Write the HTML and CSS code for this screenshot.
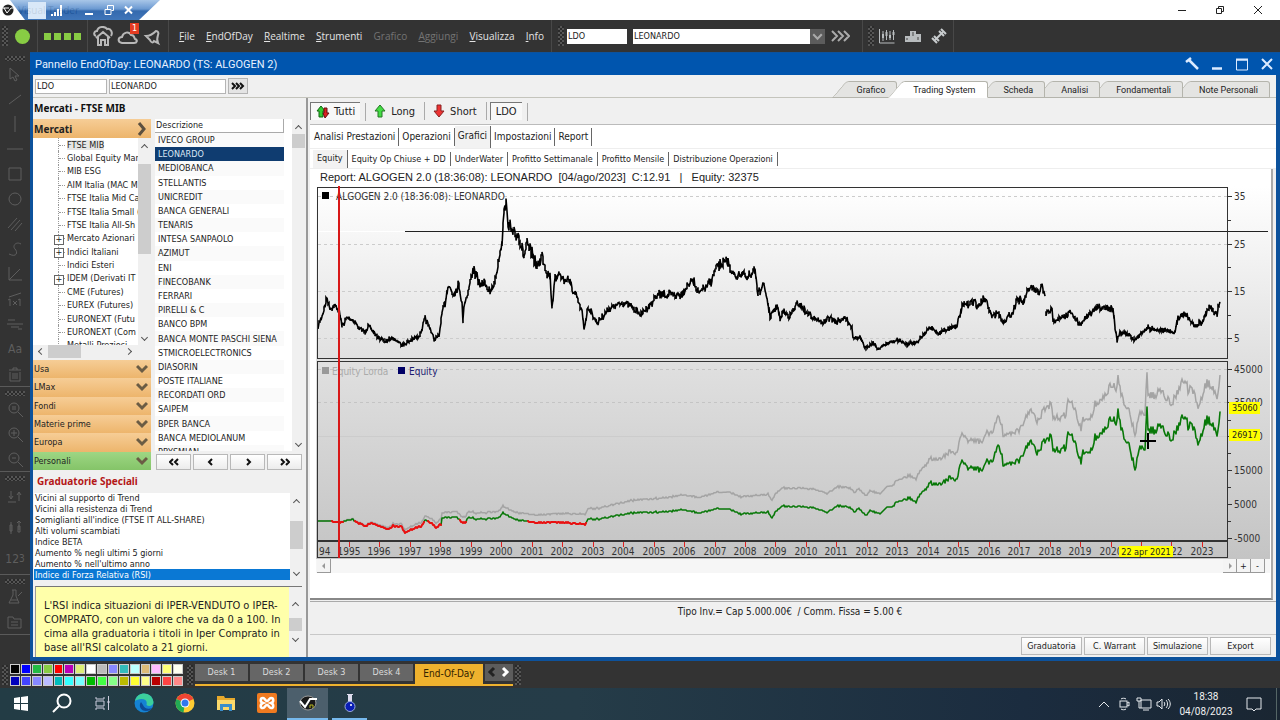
FILE: index.html
```html
<!DOCTYPE html>
<html lang="it">

<head>
    <meta charset="utf-8" />
    <title>Visual Trader</title>
    <link rel="stylesheet" href="styles.css">
</head>

<body>
    <header class="titlebar">
        <svg class="app-logo" viewBox="0 0 12 12"><circle cx="6" cy="6" r="5.500" fill="#222"/><path d="M2 4l3 5 4-5h2M1 4h6" stroke="#fff" fill="none"/></svg>
        <span class="app-name">Visual Trader</span>
        <div class="win-buttons">
            <button aria-label="Riduci"><svg viewBox="0 0 10 10"><path d="M1 5.500h8"/></svg></button>
            <button aria-label="Ripristina"><svg viewBox="0 0 10 10"><path d="M1.500 3.500h5v5h-5zM3.500 3v-1.500h5v5h-1.500"/></svg></button>
            <button aria-label="Chiudi"><svg viewBox="0 0 10 10"><path d="M1 1l8 8M9 1l-8 8"/></svg></button>
        </div>
        <!-- barra della connessione remota -->
        <div class="remote">
            <i class="remote-pin"></i>
            <svg width="18" height="13" viewBox="0 0 18 13"><path d="M6 12v-2M9 12v-4M12 12v-7M15 12v-11" stroke="#fff" stroke-width="2"/></svg>
            <svg width="10" height="12" viewBox="0 0 10 12"><path d="M1 10h8" stroke="#fff" stroke-width="2"/></svg>
            <svg width="10" height="12" viewBox="0 0 10 12"><path d="M1 5.500h6v5h-6zM3.500 5v-3.500h6v5h-2" stroke="#fff" fill="none"/></svg>
            <svg width="9" height="12" viewBox="0 0 9 12"><path d="M1 2.500l7 7M8 2.500l-7 7" stroke="#fff" stroke-width="2"/></svg>
        </div>
    </header>

    <nav class="menubar">
        <i class="grip"></i>
        <i class="led"></i>
        <div class="squares"><i></i><i></i><i></i><i></i></div>
        <div class="quick">
            <button aria-label="Home"><svg viewBox="0 0 22 20"><path d="M4 10c-3-1-2-5 1-5 1-5 8-5 10-2 4-1 6 4 4 7"/><path d="M4 12l7-6 7 6M6 11v8h3v-5h4v5h3v-8"/></svg></button>
            <button aria-label="Cloud"><svg viewBox="0 0 22 20"><path d="M5 17c-5-1-4-6 0-6 1-5 7-6 9-2 4 0 3 3 4 4 3 1 2 4-1 4z"/></svg><b>1</b></button>
            <button aria-label="Avvisi"><svg viewBox="0 0 22 20"><path d="M4 10c4 0 7-2 10-5 2 0 3 2 2 4-1 3-1 6 0 8l-4-2c-1 2-3 2-4-1z"/></svg></button>
        </div>
        <div class="menus">
            <button><u>F</u>ile</button>
            <button><u>E</u>ndOfDay</button>
            <button><u>R</u>ealtime</button>
            <button><u>S</u>trumenti</button>
            <button class="off">Grafico</button>
            <button class="off"><u>A</u>ggiungi</button>
            <button><u>V</u>isualizza</button>
            <button><u>I</u>nfo</button>
        </div>
        <i class="grip"></i>
        <input class="box ticker" aria-label="Codice" value="LDO">
        <div class="combo">
            <select class="box" aria-label="Titolo"><option>LEONARDO</option></select>
            <svg viewBox="0 0 14 14"><path d="M3 5l4 4 4-4"/></svg>
        </div>
        <button class="go" aria-label="Vai"><svg viewBox="0 0 20 12"><path d="M2 1l5 5-5 5M8 1l5 5-5 5M14 1l5 5-5 5"/></svg></button>
        <div class="extra">
            <i class="grip"></i>
            <svg viewBox="0 0 18 18"><path d="M1.500 2v14h15M5 4v10M8.500 3v10M12 4v9M15.500 3v10" stroke="#b8bcbe" fill="none"/><path d="M4 7h2v4h-2zM7.500 5h2v4h-2zM11 8h2v3h-2zM14.500 5h2v3h-2z" fill="#b8bcbe"/></svg>
            <svg viewBox="0 0 18 18"><path d="M1 9h5v-5h6v3h5v8h-16z" fill="#b8bcbe"/><path d="M9 5v4M3 11v2M14 10v3" stroke="#444"/></svg>
            <svg viewBox="0 0 18 18"><path d="M5 13l8-8" stroke="#c8ccce" stroke-width="2"/><path d="M4 9l5 5M2 11l5 5M9 4l5 5M11 2l5 5" stroke="#c8ccce" stroke-width="2"/></svg>
        </div>
    </nav>

    <main class="workspace">
        <aside class="tools">
            <div class="tool-group">
                <i class="grip-h"></i>
                <button aria-label="Seleziona"><svg viewBox="0 0 16 16"><path d="M3 2v11l3-2 2 4 2-1-2-4h4z"/></svg></button>
                <button aria-label="Linea"><svg viewBox="0 0 16 16"><path d="M2 13L14 4"/></svg></button>
                <button aria-label="Verticale"><svg viewBox="0 0 16 16"><path d="M8 0v16"/></svg></button>
                <button aria-label="Orizzontale"><svg viewBox="0 0 16 16"><path d="M0 8h16"/></svg></button>
                <button aria-label="Rettangolo"><svg viewBox="0 0 16 16"><path d="M2 2h12v12H2z"/></svg></button>
                <button aria-label="Ellisse"><svg viewBox="0 0 16 16"><circle cx="8" cy="8" r="6"/></svg></button>
                <button aria-label="Canale"><svg viewBox="0 0 16 16"><path d="M1 12L10 2M4 14L13 4M8 15l7-8"/></svg></button>
                <button aria-label="Curva"><svg viewBox="0 0 16 16"><path d="M2 13c8 4 9-2 6-5s1-8 6-5"/></svg></button>
                <button aria-label="Ventaglio"><svg viewBox="0 0 16 16"><path d="M2 1v13h13M2 14L13 3"/></svg></button>
                <button aria-label="Rapporto"><svg viewBox="0 0 16 16"><path d="M2 6l12-4M3 8v7M13 8v7M6 10l4 4M10 10l-4 4M1 9l2-1M11 9l2-1"/></svg></button>
                <button aria-label="Livelli"><svg viewBox="0 0 16 16"><path d="M1 4h7M0 8h16M4 11h8M11 13h4"/></svg></button>
                <button class="letter">Aa</button>
                <button aria-label="Cancella"><svg viewBox="0 0 16 16"><path d="M2 4h12M6 4V2h4v2M3 6v9h10V6M6 7v6M8 7v6M10 7v6"/></svg></button>
            </div>
            <div class="tool-group">
                <i class="grip-h"></i>
                <button aria-label="Zoom"><svg viewBox="0 0 16 16"><circle cx="7" cy="7" r="5"/><path d="M11 11l5 5M6 5v4M8 5v4"/></svg></button>
                <button aria-label="Ingrandisci"><svg viewBox="0 0 16 16"><circle cx="7" cy="7" r="5"/><path d="M11 11l5 5M4 7h6M7 4v6"/></svg></button>
                <button aria-label="Rimpicciolisci"><svg viewBox="0 0 16 16"><circle cx="7" cy="7" r="5"/><path d="M11 11l5 5M5 7h4"/></svg></button>
            </div>
            <div class="tool-group tall">
                <i class="grip-h"></i>
                <button aria-label="Ordini"><svg viewBox="0 0 16 16"><path d="M4 2v7M2 7l2 3 2-3M1 13h8M12 12V4M10 6l2-3 2 3"/></svg></button>
                <button aria-label="Candele"><svg viewBox="0 0 16 16"><path d="M4 2v12M3 5h2v6H3zM12 1v9M10 3l2-2 2 2M11 6h2v6h-2z"/></svg></button>
                <button class="letter" aria-label="Numeri">12<sup>3</sup></button>
            </div>
            <div class="tool-group">
                <i class="grip-h"></i>
                <button aria-label="Laboratorio"><svg viewBox="0 0 16 16"><path d="M5 1h4M6 1v5l-4 8h10l-3-7V1M4 11h7M11 7l4-4"/></svg></button>
                <button aria-label="Note"><svg viewBox="0 0 16 16"><path d="M1 3h5l1 2h7v9H1zM4 8h7M4 11h7"/></svg></button>
            </div>
        </aside>

        <section class="window">
            <div class="window-title">
                <h1>Pannello EndOfDay: LEONARDO (TS: ALGOGEN 2)</h1>
                <div class="window-buttons">
                    <button aria-label="Opzioni"><svg viewBox="0 0 14 14"><path d="M1 5l5-4M4 3l9 9" stroke-width="2.500"/></svg></button>
                    <button aria-label="Riduci"><svg viewBox="0 0 14 14"><path d="M2 11.500h10" stroke-width="2.500"/></svg></button>
                    <button aria-label="Ingrandisci"><svg viewBox="0 0 14 14"><path d="M1.500 3h11v10h-11z"/><path d="M1 2.500h12" stroke-width="2"/></svg></button>
                    <button aria-label="Chiudi"><svg viewBox="0 0 14 14"><path d="M2 2l10 10M12 2L2 12" stroke-width="2"/></svg></button>
                </div>
            </div>

            <div class="searchbar">
                <input class="field short" aria-label="Codice titolo" value="LDO">
                <input class="field" aria-label="Nome titolo" value="LEONARDO">
                <button class="more" aria-label="Cerca"><svg viewBox="0 0 14 8"><path d="M1 1l3 3-3 3M5 1l3 3-3 3M9 1l3 3-3 3"/></svg></button>
                <div class="pages">
                    <button>Grafico</button>
                    <button class="current">Trading System</button>
                    <button>Scheda</button>
                    <button>Analisi</button>
                    <button>Fondamentali</button>
                    <button>Note Personali</button>
                </div>
            </div>

            <div class="panes">
                <aside class="side">
                    <h2>Mercati - FTSE MIB</h2>
                    <div class="lists">
                        <div class="markets">
                            <button class="market-head">Mercati <svg viewBox="0 0 12 14"><path d="M3 1l5 6-5 6"/></svg></button>
                            <div class="tree-wrap">
                                <ul class="tree">
                                    <li><span class="sel">FTSE MIB</span></li>
                                    <li>Global Equity Mar</li>
                                    <li>MIB ESG</li>
                                    <li>AIM Italia (MAC M</li>
                                    <li>FTSE Italia Mid Ca</li>
                                    <li>FTSE Italia Small (</li>
                                    <li>FTSE Italia All-Sh</li>
                                    <li class="plus">Mercato Azionari</li>
                                    <li class="plus">Indici Italiani</li>
                                    <li>Indici Esteri</li>
                                    <li class="plus">IDEM (Derivati IT</li>
                                    <li>CME (Futures)</li>
                                    <li>EUREX (Futures)</li>
                                    <li>EURONEXT (Futu</li>
                                    <li>EURONEXT (Com</li>
                                    <li>Metalli Preziosi</li>
                                </ul>
                                <div class="scroll tree-scroll"><i class="up"></i><b></b><i class="down"></i></div>
                            </div>
                            <div class="hscroll"><i class="left"></i><b></b><i class="right"></i></div>
                            <div class="groups">
                                <button>Usa <svg viewBox="0 0 12 10"><path d="M1 2l5 5 5-5"/></svg></button>
                                <button>LMax <svg viewBox="0 0 12 10"><path d="M1 2l5 5 5-5"/></svg></button>
                                <button>Fondi <svg viewBox="0 0 12 10"><path d="M1 2l5 5 5-5"/></svg></button>
                                <button>Materie prime <svg viewBox="0 0 12 10"><path d="M1 2l5 5 5-5"/></svg></button>
                                <button>Europa <svg viewBox="0 0 12 10"><path d="M1 2l5 5 5-5"/></svg></button>
                                <button class="green">Personali <svg viewBox="0 0 12 10"><path d="M1 2l5 5 5-5"/></svg></button>
                            </div>
                        </div>
                        <div class="stocks">
                            <div class="stocks-body">
                                <div class="stocks-col">
                                    <div class="stocks-head">Descrizione</div>
                                    <div class="stocks-view">
                                        <ul class="stock-list">
                                            <li>IVECO GROUP</li>
                                            <li class="sel">LEONARDO</li>
                                            <li>MEDIOBANCA</li>
                                            <li>STELLANTIS</li>
                                            <li>UNICREDIT</li>
                                            <li>BANCA GENERALI</li>
                                            <li>TENARIS</li>
                                            <li>INTESA SANPAOLO</li>
                                            <li>AZIMUT</li>
                                            <li>ENI</li>
                                            <li>FINECOBANK</li>
                                            <li>FERRARI</li>
                                            <li>PIRELLI &amp; C</li>
                                            <li>BANCO BPM</li>
                                            <li>BANCA MONTE PASCHI SIENA</li>
                                            <li>STMICROELECTRONICS</li>
                                            <li>DIASORIN</li>
                                            <li>POSTE ITALIANE</li>
                                            <li>RECORDATI ORD</li>
                                            <li>SAIPEM</li>
                                            <li>BPER BANCA</li>
                                            <li>BANCA MEDIOLANUM</li>
                                            <li>PRYSMIAN</li>
                                        </ul>
                                    </div>
                                </div>
                                <div class="scroll stock-scroll"><i class="up"></i><b></b><i class="down"></i></div>
                            </div>
                            <div class="pager">
                                <button aria-label="Primo"><svg viewBox="0 0 10 8"><path d="M4 1L1 4l3 3M9 1L6 4l3 3"/></svg></button>
                                <button aria-label="Precedente"><svg viewBox="0 0 10 8"><path d="M6 1L3 4l3 3"/></svg></button>
                                <button aria-label="Successivo"><svg viewBox="0 0 10 8"><path d="M4 1l3 3-3 3"/></svg></button>
                                <button aria-label="Ultimo"><svg viewBox="0 0 10 8"><path d="M1 1l3 3-3 3M6 1l3 3-3 3"/></svg></button>
                            </div>
                        </div>
                    </div>
                    <h3>Graduatorie Speciali</h3>
                    <div class="ranks">
                        <ul class="rank-list">
                            <li>Vicini al supporto di Trend</li>
                            <li>Vicini alla resistenza di Trend</li>
                            <li>Somiglianti all'indice (FTSE IT ALL-SHARE)</li>
                            <li>Alti volumi scambiati</li>
                            <li>Indice BETA</li>
                            <li>Aumento % negli ultimi 5 giorni</li>
                            <li>Aumento % nell'ultimo anno</li>
                            <li class="sel">Indice di Forza Relativa (RSI)</li>
                        </ul>
                        <div class="scroll rank-scroll"><i class="up"></i><b></b><i class="down"></i></div>
                    </div>
                    <div class="hint">
                        <p>L'RSI indica situazioni di IPER-VENDUTO o IPER-COMPRATO, con un valore che va da 0 a 100. In cima alla graduatoria i titoli in Iper Comprato in base all'RSI calcolato a 21 giorni.</p>
                        <div class="scroll hint-scroll"><i class="up"></i><b></b><i class="down"></i></div>
                    </div>
                </aside>

                <div class="content">
                    <div class="filters">
                        <button class="pressed"><svg viewBox="0 0 14 14"><path d="M5 1l4 5h-2v6h-4v-6h-2z" fill="#3c3" stroke="#161"/><path d="M9 13l4-5h-2v-5h-3v5h-1z" fill="#d22" stroke="#611"/></svg>Tutti</button>
                        <button><svg viewBox="0 0 14 14"><path d="M7 1l5 6h-3v6h-4v-6h-3z" fill="#4d4" stroke="#272"/></svg>Long</button>
                        <button><svg viewBox="0 0 14 14"><path d="M7 13l5-6h-3v-6h-4v6h-3z" fill="#e33" stroke="#822"/></svg>Short</button>
                        <button class="pressed">LDO</button>
                    </div>
                    <div class="tabs">
                        <button>Analisi Prestazioni</button>
                        <button>Operazioni</button>
                        <button class="current">Grafici</button>
                        <button>Impostazioni</button>
                        <button>Report</button>
                    </div>
                    <div class="tabs small">
                        <button class="current">Equity</button>
                        <button>Equity Op Chiuse + DD</button>
                        <button>UnderWater</button>
                        <button>Profitto Settimanale</button>
                        <button>Profitto Mensile</button>
                        <button>Distribuzione Operazioni</button>
                    </div>
                    <div class="report">
                        <p class="report-title">Report: ALGOGEN 2.0 (18:36:08): LEONARDO  [04/ago/2023]  C:12.91   |   Equity: 32375</p>
                        <svg id="chart" viewBox="0 0 954 373"></svg>
                        <div class="chart-scroll">
                            <button aria-label="Indietro"><svg viewBox="0 0 8 8"><path d="M5 1L2 4l3 3z"/></svg></button>
                            <span></span>
                            <button aria-label="Avanti"><svg viewBox="0 0 8 8"><path d="M3 1l3 3-3 3z"/></svg></button>
                            <button>+</button>
                            <button>-</button>
                        </div>
                    </div>
                    <p class="info">Tipo Inv.= Cap 5.000.00€  / Comm. Fissa = 5.00 €</p>
                    <div class="actions">
                        <button>Graduatoria</button>
                        <button>C. Warrant</button>
                        <button>Simulazione</button>
                        <button>Export</button>
                    </div>
                </div>
            </div>
        </section>
    </main>

    <div class="deskbar">
        <i class="grip"></i>
        <div id="palette" class="palette"></div>
        <i class="grip"></i>
        <div class="desks">
            <button>Desk 1</button>
            <button>Desk 2</button>
            <button>Desk 3</button>
            <button>Desk 4</button>
            <button class="current">End-Of-Day</button>
            <span class="desk-arrows"><svg viewBox="0 0 28 14"><path d="M9 3L5 7l4 4" stroke="#222"/><path d="M18 3l4 4-4 4" stroke="#fff"/></svg></span>
        </div>
        <i class="grip"></i>
    </div>

    <footer class="taskbar">
        <div class="apps">
            <button aria-label="Start"><svg viewBox="0 0 20 20"><path d="M3 5l6-1v6H3zM10 4l7-1v7h-7zM3 11h6v6l-6-1zM10 11h7v7l-7-1z" fill="#fff"/></svg></button>
            <button aria-label="Cerca"><svg viewBox="0 0 20 20"><circle cx="12" cy="8" r="6.500" fill="none" stroke="#fff" stroke-width="2"/><path d="M7 13l-6 6" stroke="#fff" stroke-width="2"/></svg></button>
            <button aria-label="Attività"><svg viewBox="0 0 20 20"><path d="M3 4v2h8V4M3 8h8v5H3zM3 17v-2h8v2M15.500 3v14M14 9h3" fill="none" stroke="#ccd"/></svg></button>
            <button aria-label="Edge"><svg viewBox="0 0 20 20"><circle cx="10" cy="10" r="9.500" fill="#1583d3"/><path d="M1 8C3-2 18-2 19.500 9c0 4-5 5-7 3 1-4-1-6-5-6-3 0-5 1-6.500 2z" fill="#3ccf9c"/><path d="M7 9c-3 4 0 9 5 9 3 0 5-1 6-3-4 2-8 0-9-3z" fill="#0d4a96"/></svg></button>
            <button aria-label="Chrome"><svg viewBox="0 0 20 20"><circle cx="10" cy="10" r="9.500" fill="#fc3"/><path d="M10 10L1.500 6A9.500 9.500 0 0 1 18.500 6z" fill="#e43"/><path d="M10 10L1.500 6a9.500 9.500 0 0 0 7 13.500z" fill="#2a5"/><circle cx="10" cy="10" r="4.500" fill="#fff"/><circle cx="10" cy="10" r="3.500" fill="#37e"/></svg></button>
            <button aria-label="File"><svg viewBox="0 0 20 20"><path d="M1 3h7l1 2h10v12H1z" fill="#e8a92c"/><path d="M1 7h18v10H1z" fill="#fbd96b"/><path d="M4 18v-7h12v7h-3v-4H7v4z" fill="#3a8ecb"/></svg></button>
            <button aria-label="XAMPP"><svg viewBox="0 0 20 20"><rect width="20" height="20" rx="2" fill="#f07a20"/><path d="M6 5c-3 0-3 4 0 5-3 1-3 5 0 5 2 0 2-3 4-3s2 3 4 3c3 0 3-4 0-5 3-1 3-5 0-5-2 0-2 3-4 3s-2-3-4-3z" fill="none" stroke="#fff" stroke-width="2.500"/></svg></button>
            <button class="active" aria-label="Visual Trader"><svg viewBox="0 0 20 20"><ellipse cx="10" cy="10" rx="8" ry="7" fill="#191919" stroke="#999"/><path d="M2 8l5 6 5-8h7" fill="none" stroke="#fff" stroke-width="2"/><path d="M12 15v-3h3v3" fill="none" stroke="#bb2"/></svg></button>
            <button class="open" aria-label="Laboratorio"><svg viewBox="0 0 20 20"><path d="M7 1h6v1h-1v7h-4v-7h-1z" fill="#dde"/><circle cx="10" cy="13.500" r="5" fill="#0a1eb4" stroke="#9ad"/><circle cx="11" cy="12" r="1" fill="#fff"/></svg></button>
        </div>
        <div class="tray">
            <svg viewBox="0 0 16 16"><path d="M3 11l5-5 5 5"/></svg>
            <svg viewBox="0 0 16 16"><rect x="4" y="5" width="7" height="6"/><path d="M11 7l2-1v4l-2-1M5 3c1-1 4-1 5 0M5 13c1 1 4 1 5 0"/></svg>
            <svg viewBox="0 0 16 16"><path d="M5 4h10v8H5zM7 14h6M1 2h4v3H1zM3 5v7h2"/></svg>
            <svg viewBox="0 0 16 16"><path d="M1 6h2l3-3v10l-3-3H1zM8 6c1 1 1 3 0 4M10 4c2 2 2 6 0 8M12 3c3 3 3 7 0 10"/></svg>
            <div class="clock">18:38<br>04/08/2023</div>
            <svg viewBox="0 0 16 16"><path d="M1 2h14v11h-5l-2 2-2-2H1z"/></svg>
            <i class="peek"></i>
        </div>
    </footer>
    <script src="chart.js"></script>
</body>

</html>
```
FILE: styles.css
```css
* {
    margin: 0;
    padding: 0;
    box-sizing: border-box;
}

body {
    display: flex;
    flex-direction: column;
    min-height: 100vh;
    overflow-x: hidden;
    font-family: "DejaVu Sans Condensed", "DejaVu Sans", sans-serif;
    font-size: 9px;
    color: #222;
    background: #333;
}

ul {
    list-style: none;
}

button,
input,
select {
    font: inherit;
    color: inherit;
    border: none;
    background: none;
    border-radius: 0;
}

svg {
    display: block;
    flex: none;
}

/* barra del titolo */
.titlebar {
    position: relative;
    display: flex;
    align-items: center;
    height: 20px;
    padding: 0 17px 0 2px;
    background: #fff;
}

.app-logo {
    width: 12px;
    height: 12px;
}

.app-name {
    margin-left: 4px;
    font-family: "Open Sans", sans-serif;
    font-size: 10px;
}

.win-buttons {
    display: flex;
    gap: 28px;
    margin-left: auto;
}

.win-buttons svg {
    width: 10px;
    height: 10px;
    fill: none;
    stroke: #222;
}

.remote {
    position: absolute;
    left: 10px;
    top: 0;
    display: flex;
    align-items: center;
    gap: 10px;
    width: 150px;
    height: 20px;
    padding-left: 18px;
    background: linear-gradient(#9fc0e6, #5c8fcd 45%, #1f5aa6 55%, #2b67b2);
    clip-path: polygon(0 0, 100% 0, 86% 100%, 10% 100%);
    opacity: 0.9;
}

.remote svg:nth-of-type(1) {
    margin-right: 10px;
}

.remote-pin {
    width: 18px;
    height: 17px;
    margin-right: -10px;
    background: #d5e6f8;
}

/* menu principale */
.menubar {
    display: flex;
    align-items: center;
    height: 32px;
    padding-left: 2px;
    background: #333;
    color: #e4e4e4;
}

.grip {
    width: 6px;
    height: 20px;
    background: repeating-conic-gradient(#555 0 25%, #2a2a2a 0 50%) 0 0 / 4px 4px;
}

.led {
    width: 15px;
    height: 15px;
    margin: 0 7px;
    border-radius: 50%;
    background: #8c4;
}

.squares {
    display: flex;
    align-items: center;
    gap: 3px;
    height: 100%;
    padding: 0 6px;
    border-left: 1px solid #484848;
    border-right: 1px solid #484848;
}

.squares i {
    width: 7px;
    height: 7px;
    background: #8c4;
}

.quick {
    display: flex;
    align-items: center;
    gap: 3px;
    height: 100%;
    padding: 0 4px;
    border-right: 1px solid #484848;
}

.quick button {
    position: relative;
}

.quick svg {
    width: 22px;
    height: 20px;
    fill: none;
    stroke: #b8b8b8;
    stroke-width: 2;
}

.quick b {
    position: absolute;
    right: 0;
    top: -3px;
    width: 9px;
    font-weight: normal;
    line-height: 11px;
    color: #fff;
    background: #e43c22;
}

.menus {
    display: flex;
    align-items: center;
    justify-content: space-between;
    width: 383px;
    height: 100%;
    padding: 0 7px 0 10px;
    border-right: 1px solid #484848;
    margin-right: 6px;
    font-family: "Open Sans", sans-serif;
    font-size: 10px;
}

.menus .off {
    color: #747474;
}

.box {
    height: 15px;
    padding: 0 1px;
    color: #222;
    background: #fff;
    appearance: none;
}

.ticker {
    width: 60px;
    margin: 0 6px 0 3px;
}

.combo {
    display: flex;
    width: 192px;
}

.combo .box {
    flex: 1;
}

.combo svg {
    width: 15px;
    height: 15px;
    fill: none;
    stroke: #aaa;
    stroke-width: 2;
    background: #5c5c5c;
}

.go {
    margin: 0 12px 0 5px;
}

.go svg {
    width: 20px;
    height: 12px;
    fill: none;
    stroke: #aaa;
    stroke-width: 2;
}

.extra {
    display: flex;
    align-items: center;
    gap: 8px;
    height: 100%;
    padding: 0 5px;
    border-left: 1px solid #484848;
    border-right: 1px solid #484848;
}

.extra svg {
    width: 18px;
    height: 18px;
}

.extra .grip {
    margin-right: -4px;
}

/* area di lavoro */
.workspace {
    flex: 1;
    display: flex;
}

.tools {
    width: 30px;
    background: #333;
}

.tool-group {
    display: flex;
    flex-direction: column;
    align-items: center;
    padding-top: 4px;
    border-bottom: 1px solid #5a5a5a;
}

.tool-group button {
    display: flex;
    align-items: center;
    justify-content: center;
    width: 28px;
    height: 25px;
}

.tool-group.tall button {
    height: 31px;
}

.tool-group svg {
    width: 16px;
    height: 16px;
    fill: none;
    stroke: #5e5e5e;
}

.tool-group .letter {
    font-size: 12px;
    color: #5e5e5e;
}

.tool-group sup {
    font-size: 10px;
}

.grip-h {
    width: 20px;
    height: 5px;
    background: repeating-conic-gradient(#555 0 25%, #2a2a2a 0 50%) 0 0 / 4px 4px;
}

.window {
    flex: 1;
    display: flex;
    flex-direction: column;
    min-width: 0;
    border: solid #0d529c;
    border-width: 1px 4px 4px 3px;
    background: #f0f0f0;
}

.window-title {
    display: flex;
    align-items: center;
    justify-content: space-between;
    height: 22px;
    margin-right: -4px;
    margin-left: -3px;
    padding: 0 6px 0 5px;
    background: #0055ae;
    color: #e8f2ff;
}

.window-title h1 {
    font-size: 11px;
    font-weight: normal;
    font-family: "Roboto", sans-serif;
}

.window-buttons {
    display: flex;
    gap: 11px;
}

.window-buttons svg {
    width: 14px;
    height: 14px;
    fill: none;
    stroke: #dcebff;
}

.searchbar {
    display: flex;
    align-items: center;
    gap: 2px;
    height: 23px;
    padding-left: 2px;
    border-bottom: 1px solid #c4c4bc;
}

.field {
    width: 117px;
    height: 15px;
    padding: 0 1px;
    border: 1px solid #b4b4b4;
    background: #fff;
}

.field.short {
    width: 72px;
}

.more {
    display: flex;
    align-items: center;
    justify-content: center;
    width: 20px;
    height: 16px;
    border: 1px solid #b4b4b4;
    background: #e4e4e4;
}

.more svg {
    width: 14px;
    height: 8px;
    fill: none;
    stroke: #111;
    stroke-width: 2;
}

.pages {
    align-self: flex-end;
    display: flex;
    margin-left: auto;
    margin-right: 6px;
    margin-bottom: -1px;
    font-family: "Roboto", sans-serif;
}

.pages button {
    position: relative;
    height: 17px;
    margin-left: -9px;
    padding: 0 12px 0 25px;
    isolation: isolate;
}

.pages button::before,
.pages button::after {
    content: "";
    position: absolute;
    top: 0;
    bottom: 0;
    z-index: -1;
    border-top: 1px solid #b4b4ac;
    border-bottom: 1px solid #b4b4ac;
    background: #e4e4e2;
}

.pages button::before {
    left: 0;
    width: 20px;
    border-left: 1px solid #b4b4ac;
    transform: skewX(-40deg);
    transform-origin: bottom;
    border-top-left-radius: 3px;
}

.pages button::after {
    left: 18px;
    right: 0;
    border-right: 1px solid #b4b4ac;
    border-top-right-radius: 3px;
}

.pages button:nth-child(3) { z-index: 4; }
.pages button:nth-child(4) { z-index: 3; }
.pages button:nth-child(5) { z-index: 2; }
.pages button:nth-child(6) { z-index: 1; }

.pages .current {
    z-index: 5;
}

.pages .current::before,
.pages .current::after {
    background: #fff;
    border-bottom-color: #fff;
}

.panes {
    flex: 1;
    display: flex;
}

/* colonna sinistra */
.side {
    width: 275px;
    border-right: 2px solid #999;
}

.side h2,
.side h3,
.market-head {
    font-family: "Noto Sans", sans-serif;
    font-size: 10px;
    font-weight: bold;
}

.side h2 {
    padding-left: 1px;
    line-height: 21px;
    color: #111;
}

.lists {
    display: flex;
    gap: 4px;
    height: 351px;
}

.markets {
    display: flex;
    flex-direction: column;
    width: 118px;
}

.market-head,
.groups button {
    display: flex;
    align-items: center;
    justify-content: space-between;
    width: 100%;
    padding: 0 3px 0 1px;
    background: linear-gradient(#f6cd96, #edb56c);
}

.market-head {
    height: 19px;
}

.market-head svg {
    width: 12px;
    height: 14px;
    fill: none;
    stroke: #5c5040;
    stroke-width: 3;
}

.tree-wrap {
    display: flex;
    height: 207px;
    overflow: hidden;
    background: #fff;
}

.tree {
    position: relative;
    flex: 1;
    display: grid;
    grid-auto-rows: 1fr;
    height: 214px;
    padding-left: 25px;
    overflow: hidden;
}

.tree li {
    position: relative;
    display: flex;
    align-items: center;
    padding-left: 8px;
    white-space: nowrap;
    border-left: 1px dotted #999;
}

.tree li::before {
    content: "";
    position: absolute;
    left: 0;
    top: 50%;
    width: 6px;
    border-top: 1px dotted #999;
}

.tree .plus::after {
    content: "+";
    position: absolute;
    left: -5px;
    top: 3px;
    width: 8px;
    height: 8px;
    line-height: 6px;
    text-align: center;
    border: 1px solid #666;
    background: #fff;
}

.tree .sel {
    background: #e6e6e6;
}

.scroll {
    display: flex;
    flex-direction: column;
    align-items: center;
    width: 13px;
    background: #f0f0f0;
}

.scroll i,
.hscroll i {
    flex: none;
    width: 5px;
    height: 5px;
    border: solid #555;
    border-width: 1px 0 0 1px;
}

.scroll b,
.hscroll b {
    background: #cdcdcd;
}

.scroll b {
    width: 100%;
}

.scroll .up {
    transform: rotate(45deg);
    margin: 7px 0 6px;
}

.scroll .down {
    transform: rotate(225deg);
    margin: auto 0 5px;
}

.tree-scroll b {
    height: 90px;
    margin-top: 8px;
}

.hscroll {
    display: flex;
    align-items: center;
    height: 13px;
    margin-bottom: 2px;
    padding: 0 20px 0 6px;
    background: #f0f0f0;
}

.hscroll b {
    width: 33px;
    height: 13px;
    margin-left: 4px;
}

.hscroll .left {
    transform: rotate(-45deg);
}

.hscroll .right {
    margin-left: auto;
    transform: rotate(135deg);
}

.groups {
    flex: 1;
    display: grid;
    grid-auto-rows: 1fr;
}

.groups svg {
    width: 12px;
    height: 10px;
    fill: none;
    stroke: #6b5c44;
    stroke-width: 3;
}

.groups .green {
    background: linear-gradient(#9ed684, #84c468);
}

.stocks {
    flex: 1;
    display: flex;
    flex-direction: column;
}

.stocks-body {
    display: flex;
    height: 332px;
    margin-right: 1px;
    background: #fff;
}

.stocks-col {
    flex: 1;
}

.stocks-head {
    width: 129px;
    height: 14px;
    padding-left: 1px;
    line-height: 13px;
    border-right: 1px solid #aaa;
    border-bottom: 1px solid #aaa;
}

.stocks-view {
    height: 318px;
    overflow: hidden;
}

.stock-list {
    display: grid;
    grid-auto-rows: 1fr;
    width: 129px;
    height: 326px;
}

.stock-list li {
    display: flex;
    align-items: center;
    padding-left: 3px;
    white-space: nowrap;
}

.stock-list li:nth-child(odd) {
    background: #fafafa;
}

.stock-list .sel {
    color: #dbe7f5;
    background: #0f3c70;
}

.stock-scroll b {
    height: 14px;
    margin-top: -3px;
}

.pager {
    display: grid;
    grid-template-columns: repeat(4, 1fr);
    gap: 2px;
    margin-top: auto;
    padding: 0 4px 0 1px;
}

.pager button,
.actions button {
    display: flex;
    align-items: center;
    justify-content: center;
    height: 16px;
    border: 1px solid #b8b8b8;
    background: linear-gradient(#fff, #ececec);
}

.pager svg {
    width: 10px;
    height: 8px;
    fill: none;
    stroke: #111;
    stroke-width: 2;
}

.side h3 {
    padding-left: 4px;
    line-height: 23px;
    color: #b41818;
}

.ranks {
    display: flex;
    height: 87px;
    padding: 0 3px 0 1px;
}

.rank-list {
    flex: 1;
    display: grid;
    grid-auto-rows: 1fr;
    background: #fff;
}

.rank-list li {
    display: flex;
    align-items: center;
    padding-left: 1px;
}

.rank-list .sel {
    color: #fff;
    background: #0a78d4;
}

.rank-scroll b {
    height: 28px;
    margin-top: 10px;
}

.hint {
    display: flex;
    height: 71px;
    margin: 6px 4px 0 2px;
    border-top: 1px solid #777;
    border-left: 1px solid #999;
    background: #ffa;
}

.hint p {
    flex: 1;
    padding: 12px 0 0 8px;
    font-size: 11px;
    line-height: 14px;
}

.hint-scroll b {
    height: 13px;
    margin-top: 10px;
}

.hint-scroll .up {
    margin-top: 16px;
    margin-bottom: 0;
}

.hint-scroll .down {
    margin-bottom: 16px;
}

/* contenuto */
.content {
    flex: 1;
    display: flex;
    flex-direction: column;
    min-width: 0;
    padding-left: 2px;
}

.filters {
    display: flex;
    align-items: center;
    gap: 4px;
    height: 27px;
    border-bottom: 1px solid #bbb;
    font-size: 11px;
}

.filters button {
    display: flex;
    align-items: center;
    gap: 4px;
    height: 18px;
    margin-right: 5px;
    padding: 0 4px;
    position: relative;
}

.filters button::after {
    content: "";
    position: absolute;
    right: -6px;
    top: 0;
    height: 18px;
    border-right: 1px solid #aaa;
}

.filters .pressed {
    padding: 0 5px;
    border-top: 1px solid #777;
    border-left: 1px solid #777;
    background: #f8f8f8;
}

.filters svg {
    width: 14px;
    height: 14px;
}

.tabs {
    display: flex;
    align-items: center;
    height: 24px;
    padding-left: 1px;
    font-size: 10px;
    background: #fff;
    border-bottom: 1px solid #eee;
}

.tabs button {
    height: 18px;
    padding: 0 3px;
    border-right: 1px solid #666;
}

.tabs .current {
    align-self: flex-end;
    height: 22px;
    padding-bottom: 4px;
    background: #f2f2f2;
}

.tabs.small {
    height: 20px;
    padding-left: 3px;
    font-size: 9px;
}

.tabs.small button {
    height: 14px;
    padding: 0 4px;
}

.tabs.small .current {
    height: 18px;
    padding-bottom: 2px;
}

.report {
    flex: 1;
    margin-right: 3px;
    padding: 0 1px 0 6px;
    background: #fff;
    border-right: 2px solid #aaa;
    border-bottom: 2px solid #888;
}

.report-title {
    padding-left: 4px;
    font-family: "Liberation Sans", sans-serif;
    font-size: 11px;
    line-height: 17px;
    white-space: pre;
}

#chart {
    width: 100%;
    height: auto;
}

#chart text {
    font-size: 10px;
    fill: #333;
}

#chart .tag {
    font-size: 9px;
    fill: #222;
}

#chart .gross {
    fill: #aaa;
}

#chart .net {
    fill: #1a1a70;
}

.chart-scroll {
    display: flex;
    height: 14px;
    padding: 0 5px 0 1px;
    background: #f6f6f6;
}

.chart-scroll span {
    flex: 1;
}

.chart-scroll button {
    display: flex;
    align-items: center;
    justify-content: center;
    width: 14px;
    border: solid #999;
    border-width: 0 1px 1px 0;
    background: #f4f4f4;
}

.chart-scroll svg {
    width: 8px;
    height: 8px;
    fill: #999;
}

.info {
    height: 34px;
    margin-top: 1px;
    padding-right: 6px;
    font-size: 10px;
    line-height: 20px;
    text-align: center;
    white-space: pre;
    border-top: 1px solid #aaa;
    border-bottom: 1px solid #c8c8c8;
}

.actions {
    display: flex;
    justify-content: flex-end;
    align-items: center;
    gap: 2px;
    height: 22px;
    padding-right: 5px;
}

.actions button {
    width: 61px;
    height: 18px;
}

/* barra dei desk */
.deskbar {
    display: flex;
    align-items: center;
    gap: 2px;
    height: 27px;
    padding-left: 2px;
    background: #333;
}

.palette {
    display: grid;
    grid-template-columns: repeat(16, 1fr);
    grid-auto-rows: 10px;
    gap: 2px 1px;
    width: 173px;
    margin-right: 2px;
}

.palette button {
    border: 1px solid #ccc;
}

.desks {
    display: flex;
    gap: 2px;
    height: 22px;
    padding-bottom: 3px;
    border-bottom: 2px solid #efb22e;
    color: #ddd;
}

.desks button {
    width: 53px;
    background: #666;
}

.desks .current {
    width: 68px;
    margin-bottom: -3px;
    font-size: 10px;
    color: #332200;
    background: #efb22e;
}

.desk-arrows {
    display: flex;
    align-items: center;
    background: #5c5c5c;
}

.desk-arrows svg {
    width: 28px;
    height: 14px;
    fill: none;
    stroke-width: 3;
}

/* barra delle applicazioni */
.taskbar {
    display: flex;
    justify-content: space-between;
    height: 32px;
    background: linear-gradient(90deg, #233c45, #253c48 45%, #1b2c3f 80%, #1a2632);
}

.apps {
    display: flex;
}

.apps button {
    display: flex;
    align-items: center;
    justify-content: center;
    width: 41px;
    border-bottom: 2px solid transparent;
}

.apps svg {
    width: 20px;
    height: 20px;
}

.apps .active {
    background: #4c5f6c;
    border-bottom-color: #76b9ed;
}

.apps .open {
    width: 35px;
    margin-left: 4px;
    border-bottom-color: #76b9ed;
}

.tray {
    display: flex;
    align-items: center;
    gap: 4px;
}

.tray svg {
    width: 16px;
    height: 16px;
    fill: none;
    stroke: #e4e8ec;
}

.clock {
    width: 60px;
    margin-right: 6px;
    font-family: "Roboto", sans-serif;
    font-size: 10px;
    line-height: 15px;
    text-align: center;
    color: #f0f0f0;
}

.peek {
    height: 100%;
    margin: 0 3px 0 10px;
    border-left: 1px solid #566;
}
```
FILE: chart.js
```js
var NS = "http://www.w3.org/2000/svg";
var chart = document.getElementById("chart");

//crea un elemento svg e lo aggiunge al grafico
function add(tag, attrs, text) {
    var el = document.createElementNS(NS, tag);
    for (var k in attrs) {
        el.setAttribute(k, attrs[k]);
    }
    if (text) {
        el.textContent = text;
    }
    chart.appendChild(el);
    return el;
}

function line(x1, y1, x2, y2, color, width, dash) {
    add("line", { x1: x1, y1: y1, x2: x2, y2: y2, stroke: color, "stroke-width": width || 1, "stroke-dasharray": dash || "none" });
}

//generatore pseudo casuale, sempre uguale
var seed = 7;
function rnd() {
    seed = (seed * 16807) % 2147483647;
    return seed / 2147483647 - 0.5;
}

//valore interpolato tra i punti [x, y]
function at(points, x) {
    for (var i = 1; i < points.length; i++) {
        if (x <= points[i][0]) {
            var a = points[i - 1], b = points[i];
            return a[1] + (b[1] - a[1]) * (x - a[0]) / (b[0] - a[0]);
        }
    }
    return points[points.length - 1][1];
}

var price = [[2,140],[7,127],[11,112],[14,122],[19,120],[23,124],[26,140],[31,132],[37,134],[44,143],[49,146],[52,140],[61,150],[70,156],[75,151],[87,159],[94,155],[104,149],[109,133],[114,142],[118,153],[123,150],[126,128],[129,117],[132,98],[137,108],[143,98],[146,118],[147,136],[148,118],[152,107],[157,83],[165,101],[169,96],[174,107],[179,96],[183,73],[186,53],[188,26],[190,16],[192,38],[197,49],[203,49],[208,71],[211,59],[216,68],[221,82],[226,69],[231,86],[234,91],[236,121],[239,94],[242,86],[249,96],[252,91],[257,106],[261,112],[266,126],[268,143],[272,121],[281,137],[294,122],[309,116],[317,122],[325,129],[342,109],[364,109],[376,94],[384,107],[394,97],[402,79],[412,77],[419,91],[427,86],[431,94],[438,82],[442,109],[447,96],[451,112],[454,132],[461,119],[464,134],[467,126],[474,130],[482,117],[491,127],[507,137],[514,131],[519,136],[529,132],[536,141],[537,151],[544,152],[549,162],[557,157],[562,163],[572,157],[582,154],[589,158],[601,156],[607,149],[614,142],[622,147],[641,139],[646,121],[659,114],[661,122],[669,112],[676,131],[682,126],[687,136],[697,126],[701,112],[707,117],[714,101],[721,107],[726,101],[729,109],[730,127],[736,124],[737,134],[747,132],[754,126],[764,139],[771,129],[781,122],[797,122],[799,141],[801,154],[804,146],[812,148],[819,154],[831,141],[841,144],[859,146],[862,131],[869,127],[879,141],[886,136],[892,122],[901,127],[904,116]];

var equity = [[2,335],[16,335],[17,336],[27,336],[29,335],[37,333],[39,335],[49,340],[56,337],[66,341],[72,343],[77,340],[86,341],[89,347],[94,344],[106,340],[109,334],[116,337],[120,342],[125,338],[126,332],[141,331],[146,336],[150,336],[152,331],[161,333],[181,333],[187,327],[194,331],[201,334],[212,335],[213,336],[227,337],[244,336],[251,337],[269,338],[272,333],[284,333],[294,331],[314,327],[347,326],[367,324],[384,327],[399,323],[414,323],[424,328],[442,327],[452,326],[456,332],[459,326],[467,320],[489,321],[499,322],[511,326],[522,320],[532,320],[539,326],[543,322],[550,330],[554,324],[564,328],[571,321],[577,320],[582,315],[594,312],[600,316],[606,305],[611,302],[613,296],[621,299],[627,296],[634,292],[641,294],[645,276],[652,281],[666,284],[671,275],[677,275],[681,262],[686,266],[687,279],[701,275],[707,272],[709,264],[713,255],[722,267],[727,257],[735,251],[737,266],[749,262],[752,249],[757,252],[765,277],[767,267],[776,263],[779,252],[789,244],[794,234],[801,237],[802,221],[804,236],[807,247],[812,257],[819,282],[824,262],[829,261],[831,222],[832,242],[837,246],[846,237],[854,254],[861,244],[864,234],[869,231],[872,240],[877,242],[882,257],[886,247],[891,232],[901,246],[904,226]];

//distanza tra equity lorda ed equity netta
var gap = [[2,0],[60,1],[124,5],[230,8],[284,11],[414,17],[564,20],[645,27],[730,32],[804,34],[904,37]];

var defs = add("defs", {});
defs.innerHTML = '<linearGradient id="bg" x2="0" y2="1"><stop offset="0" stop-color="#fff"/><stop offset="0.470" stop-color="#e0e0e0"/><stop offset="1" stop-color="#c4c4c4"/></linearGradient>';
add("rect", { x: 0, y: 0, width: 954, height: 373, fill: "url(#bg)" });

//griglia e scala dei prezzi
[[10, "35"], [58, "25"], [105, "15"], [152, "5"]].forEach(function (t) {
    line(2, t[0] + 0.5, 912, t[0] + 0.5, "#ccc", 1, "3 3");
    line(912, t[0] + 0.5, 916, t[0] + 0.5, "#333");
    add("text", { x: 918, y: t[0] + 4 }, t[1]);
});
[34, 81, 129, 200, 234, 267, 301, 335].forEach(function (y) {
    line(912, y + 0.5, 915, y + 0.5, "#333");
});
[[183, "45000"], [216, "35000"], [250, "25000"], [284, "15000"], [318, "5000"], [352, "-5000"]].forEach(function (t, i) {
    if (i < 3) {
        line(2, t[0] + 0.5, 912, t[0] + 0.5, i < 2 ? "#c4c4c4" : "#ccc", 1, i < 2 ? "3 3" : "none");
    }
    line(912, t[0] + 0.5, 916, t[0] + 0.5, "#333");
    add("text", { x: 918, y: t[0] + 4 }, t[1]);
});

line(2, 45.5, 89, 45.5, "#fff");
line(89, 45.5, 952, 45.5, "#222");

//legende
add("rect", { x: 6, y: 6, width: 7, height: 7, fill: "#000" });
add("text", { x: 20, y: 14 }, "ALGOGEN 2.0 (18:36:08): LEONARDO");
add("rect", { x: 6, y: 181, width: 7, height: 7, fill: "#999" });
add("text", { x: 16, y: 189, "class": "gross" }, "Equity Lorda");
add("rect", { x: 82, y: 181, width: 7, height: 7, fill: "#000066" });
add("text", { x: 93, y: 189, "class": "net" }, "Equity");

//prezzo
var d = "", x, y, n;
for (x = 2; x <= 904; x += 1) {
    y = at(price, x);
    n = y < 40 ? 4 : 1.5 + (172 - y) * 0.06;
    d += (x == 2 || x == 730 ? "M" : "L") + x + " " + (y + rnd() * n).toFixed(1) + "V" + (y + rnd() * n * 2).toFixed(1);
}
add("path", { d: d, fill: "none", stroke: "#000", "stroke-width": 1.6 });

//equity: verde sopra il capitale iniziale, rossa sotto
var gross = "", up = "", down = "", prev = null;
for (x = 2; x <= 904; x += 1) {
    y = at(equity, x);
    n = x < 20 ? 0 : 1.5 + Math.max(0, 322 - y) * 0.1;
    y = Math.round(y + rnd() * n);
    gross += (x == 2 ? "M" : "L") + x + " " + (y - at(gap, x)).toFixed(1);
    if (prev !== null) {
        var seg = "M" + (x - 1) + " " + prev + "L" + x + " " + y;
        if (y > 335) {
            down += seg;
        } else {
            up += seg;
        }
    }
    prev = y;
}
add("path", { d: gross, fill: "none", stroke: "#a4a4a4", "stroke-width": 1.5 });
add("path", { d: up, fill: "none", stroke: "#087808", "stroke-width": 1.6, "stroke-linecap": "round" });
add("path", { d: down, fill: "none", stroke: "#e81010", "stroke-width": 2, "stroke-linecap": "round" });

//cornici
add("rect", { x: 1.5, y: 1.5, width: 910, height: 171, fill: "none", stroke: "#333" });
add("rect", { x: 1.5, y: 175.5, width: 910, height: 179, fill: "none", stroke: "#333" });
add("rect", { x: 1.5, y: 355.5, width: 910, height: 16, fill: "none", stroke: "#333" });

//anni, il 2021 sta sotto l'etichetta della data
add("text", { x: 3, y: 369 }, "94");
for (var i = 0; i < 29; i++) {
    var cx = Math.round(33 + i * 30.46);
    line(cx + 0.5, 356, cx + 0.5, 361, "#e02020");
    if (i != 26) {
        add("text", { x: cx, y: 369, "text-anchor": "middle" }, String(1995 + i));
    }
}

//cursore ed etichette
line(23, 0, 23, 372, "#d81818", 2);
[[222, "35060"], [249, "26917"]].forEach(function (t) {
    add("rect", { x: 913, y: t[0] - 6, width: 31, height: 12, fill: "#ffff00" });
    add("text", { x: 916, y: t[0] + 3, "class": "tag" }, t[1]);
});
add("rect", { x: 803, y: 360, width: 54, height: 11, fill: "#ffff00" });
add("text", { x: 830, y: 369, "text-anchor": "middle", "class": "tag" }, "22 apr 2021");
line(824, 255, 840, 255, "#000", 2);
line(832, 247, 832, 263, "#000", 2);

//tavolozza dei colori
var colors = ["#000", "#00f", "#2b4", "#8c4", "#f00", "#b0b", "#de7", "#fff", "#bbb", "#88f", "#3bb", "#bff", "#db7", "#fbf", "#ff7", "#fffff0",
    "#00b", "#44f", "#88f", "#bbf", "#0bb", "#3ff", "#7ff", "#0b0", "#4f4", "#8f8", "#bb0", "#ff3", "#ff8", "#b00", "#f44", "#f88"];
var palette = document.getElementById("palette");
colors.forEach(function (c) {
    var b = document.createElement("button");
    b.setAttribute("aria-label", c);
    b.style.background = c;
    palette.appendChild(b);
});
```
